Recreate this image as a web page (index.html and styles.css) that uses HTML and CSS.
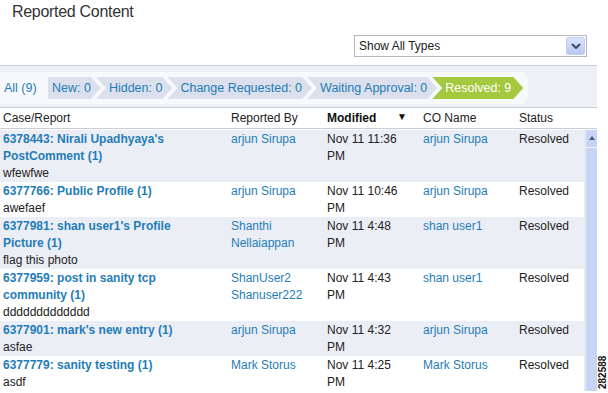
FILE: index.html
```html
<!DOCTYPE html>
<html lang="en">
<head>
    <meta charset="UTF-8">
    <meta name="viewport" content="width=device-width, initial-scale=1.0">
    <title>Reported Content</title>
    <link rel="stylesheet" href="styles.css">
</head>
<body>
    <div class="page">
        <h1 class="title">Reported Content</h1>
        <div class="filter">
            <div class="select">
                <span class="select_text">Show All Types</span>
                <span class="select_btn">
                    <svg width="10" height="6" viewBox="0 0 10 6"><path d="M1 1 L5 5 L9 1" fill="none" stroke="#3c4a6a" stroke-width="2"/></svg>
                </span>
            </div>
        </div>
        <div class="tabbar">
            <div class="tabs">
                <a class="tab_all">All (9)</a>
                <a class="tab tab_first">New: 0</a>
                <a class="tab">Hidden: 0</a>
                <a class="tab">Change Requested: 0</a>
                <a class="tab">Waiting Approval: 0</a>
                <a class="tab tab_on">Resolved: 9</a>
            </div>
        </div>
        <div class="grid">
            <table class="head">
                <colgroup>
                    <col class="c_case"><col class="c_by"><col class="c_mod"><col class="c_co"><col class="c_st"><col class="c_sb">
                </colgroup>
                <tr>
                    <th>Case/Report</th>
                    <th>Reported By</th>
                    <th class="sorted">Modified <span class="arrow">&#9660;</span></th>
                    <th>CO Name</th>
                    <th>Status</th>
                    <th></th>
                </tr>
            </table>
            <div class="body">
                <table class="rows">
                    <colgroup>
                        <col class="c_case"><col class="c_by"><col class="c_mod"><col class="c_co"><col class="c_st">
                    </colgroup>
                    <tr class="odd">
                        <td><a class="case">6378443: Nirali Upadhyaya's PostComment (1)</a><div>wfewfwe</div></td>
                        <td class="by"><a>arjun Sirupa</a></td>
                        <td class="mod">Nov 11 11:36 PM</td>
                        <td><a>arjun Sirupa</a></td>
                        <td>Resolved</td>
                    </tr>
                    <tr>
                        <td><a class="case">6377766: Public Profile (1)</a><div>awefaef</div></td>
                        <td class="by"><a>arjun Sirupa</a></td>
                        <td class="mod">Nov 11 10:46 PM</td>
                        <td><a>arjun Sirupa</a></td>
                        <td>Resolved</td>
                    </tr>
                    <tr class="odd">
                        <td><a class="case">6377981: shan user1's Profile Picture (1)</a><div>flag this photo</div></td>
                        <td class="by"><a>Shanthi Nellaiappan</a></td>
                        <td class="mod">Nov 11 4:48 PM</td>
                        <td><a>shan user1</a></td>
                        <td>Resolved</td>
                    </tr>
                    <tr>
                        <td><a class="case">6377959: post in sanity tcp community (1)</a><div>ddddddddddddd</div></td>
                        <td class="by"><a>ShanUser2</a> <a>Shanuser222</a></td>
                        <td class="mod">Nov 11 4:43 PM</td>
                        <td><a>shan user1</a></td>
                        <td>Resolved</td>
                    </tr>
                    <tr class="odd">
                        <td><a class="case">6377901: mark's new entry (1)</a><div>asfae</div></td>
                        <td class="by"><a>arjun Sirupa</a></td>
                        <td class="mod">Nov 11 4:32 PM</td>
                        <td><a>arjun Sirupa</a></td>
                        <td>Resolved</td>
                    </tr>
                    <tr>
                        <td><a class="case">6377779: sanity testing (1)</a><div>asdf</div></td>
                        <td class="by"><a>Mark Storus</a></td>
                        <td class="mod">Nov 11 4:25 PM</td>
                        <td><a>Mark Storus</a></td>
                        <td>Resolved</td>
                    </tr>
                </table>
                <div class="scroll">
                    <div class="scroll_up">
                        <svg width="6" height="4" viewBox="0 0 6 4"><path d="M0 4 L3 0 L6 4 Z" fill="#4a5878"/></svg>
                    </div>
                </div>
            </div>
        </div>
        <div class="fig_id">282588</div>
    </div>
</body>
</html>
```

FILE: styles.css
```css
*{
    margin: 0;
    padding: 0;
    box-sizing: border-box;
}
body{
    width: 608px;
    height: 393px;
    overflow: hidden;
    background: #fff;
    font-family: "Liberation Sans", Arial, sans-serif;
    font-size: 12px;
    color: #222;
}
.page{
    position: relative;
    width: 608px;
    height: 393px;
    overflow: hidden;
}
a{
    color: #1f7db8;
    text-decoration: none;
}
.title{
    font-size: 16px;
    font-weight: normal;
    letter-spacing: -0.3px;
    line-height: 22px;
    padding: 1px 0 0 12px;
    height: 22px;
    color: #333;
}
.filter{
    display: flex;
    justify-content: flex-end;
    padding: 13px 21px 0 0;
}
.select{
    width: 233px;
    height: 22px;
    border: 1px solid #b4b8c0;
    display: flex;
    align-items: center;
    justify-content: space-between;
    padding: 0 1px 0 4px;
    font-size: 12px;
    color: #222;
}
.select_btn{
    width: 19px;
    height: 18px;
    background: linear-gradient(#dbe4fb, #b8c8f2);
    border: 1px solid #c3cdea;
    border-radius: 2px;
    display: flex;
    align-items: center;
    justify-content: center;
}
.tabbar{
    margin-top: 8px;
    width: 597px;
    height: 43px;
    border-top: 1px solid #c9ccd4;
    border-bottom: 1px solid #c9ccd4;
    background: #eef0f7;
    padding-top: 6px;
}
.tabs{
    width: 528px;
    height: 32px;
    background: #f8f9fc;
    border-radius: 0 8px 8px 0;
    display: flex;
    align-items: center;
    padding-left: 4px;
    font-size: 12.5px;
    white-space: nowrap;
}
.tab_all{
    color: #1f7db8;
    width: 44px;
    flex-shrink: 0;
}
.tab{
    flex-shrink: 0;
    height: 22px;
    line-height: 22px;
    padding: 0 10px 0 13px;
    margin-left: -5px;
    background: #dbe0ec;
    color: #1f7db8;
    clip-path: polygon(0 0, calc(100% - 10px) 0, 100% 50%, calc(100% - 10px) 100%, 0 100%, 10px 50%);
}
.tab_first{
    margin-left: 0;
    padding-left: 4px;
    clip-path: polygon(0 0, calc(100% - 10px) 0, 100% 50%, calc(100% - 10px) 100%, 0 100%);
}
.tab_on{
    background: #a5c93e;
    color: #fff;
    padding-right: 12px;
}
.grid{
    width: 597px;
}
table{
    border-collapse: collapse;
    table-layout: fixed;
}
.head{
    width: 597px;
    border-bottom: 1px solid #c9ccd4;
}
.head th{
    height: 20px;
    text-align: left;
    font-weight: normal;
    padding-left: 3px;
    color: #222;
}
.head .sorted{
    font-weight: bold;
    color: #111;
}
.arrow{
    float: right;
    font-size: 10px;
    padding-right: 13px;
}
.c_case{ width: 228px; }
.c_by{ width: 96px; }
.c_mod{ width: 96px; }
.c_co{ width: 96px; }
.c_st{ width: 68px; }
.c_sb{ width: 13px; }
.body{
    display: flex;
    margin-top: 1px;
}
.rows{
    width: 584px;
}
.rows td{
    vertical-align: top;
    line-height: 17px;
    padding: 1px 0 0 3px;
}
.rows tr{
    height: 35px;
}
.rows tr.odd{
    background: #eceef6;
}
.rows td:first-child{
    padding-right: 20px;
}
.case{
    font-weight: bold;
    display: block;
}
.rows .by{
    padding-right: 8px;
}
.rows .mod{
    padding-right: 16px;
}
.scroll{
    width: 13px;
    background: #c7d4f6;
    border-left: 2px solid #e6e9f2;
}
.scroll_up{
    height: 18px;
    border-bottom: 1px solid #f2f5ff;
    display: flex;
    align-items: center;
    justify-content: center;
}
.fig_id{
    position: absolute;
    left: 597px;
    top: 352px;
    width: 11px;
    height: 40px;
    writing-mode: vertical-rl;
    transform: rotate(180deg);
    font-size: 10px;
    font-weight: bold;
    color: #111;
    text-align: center;
    line-height: 11px;
}
```
